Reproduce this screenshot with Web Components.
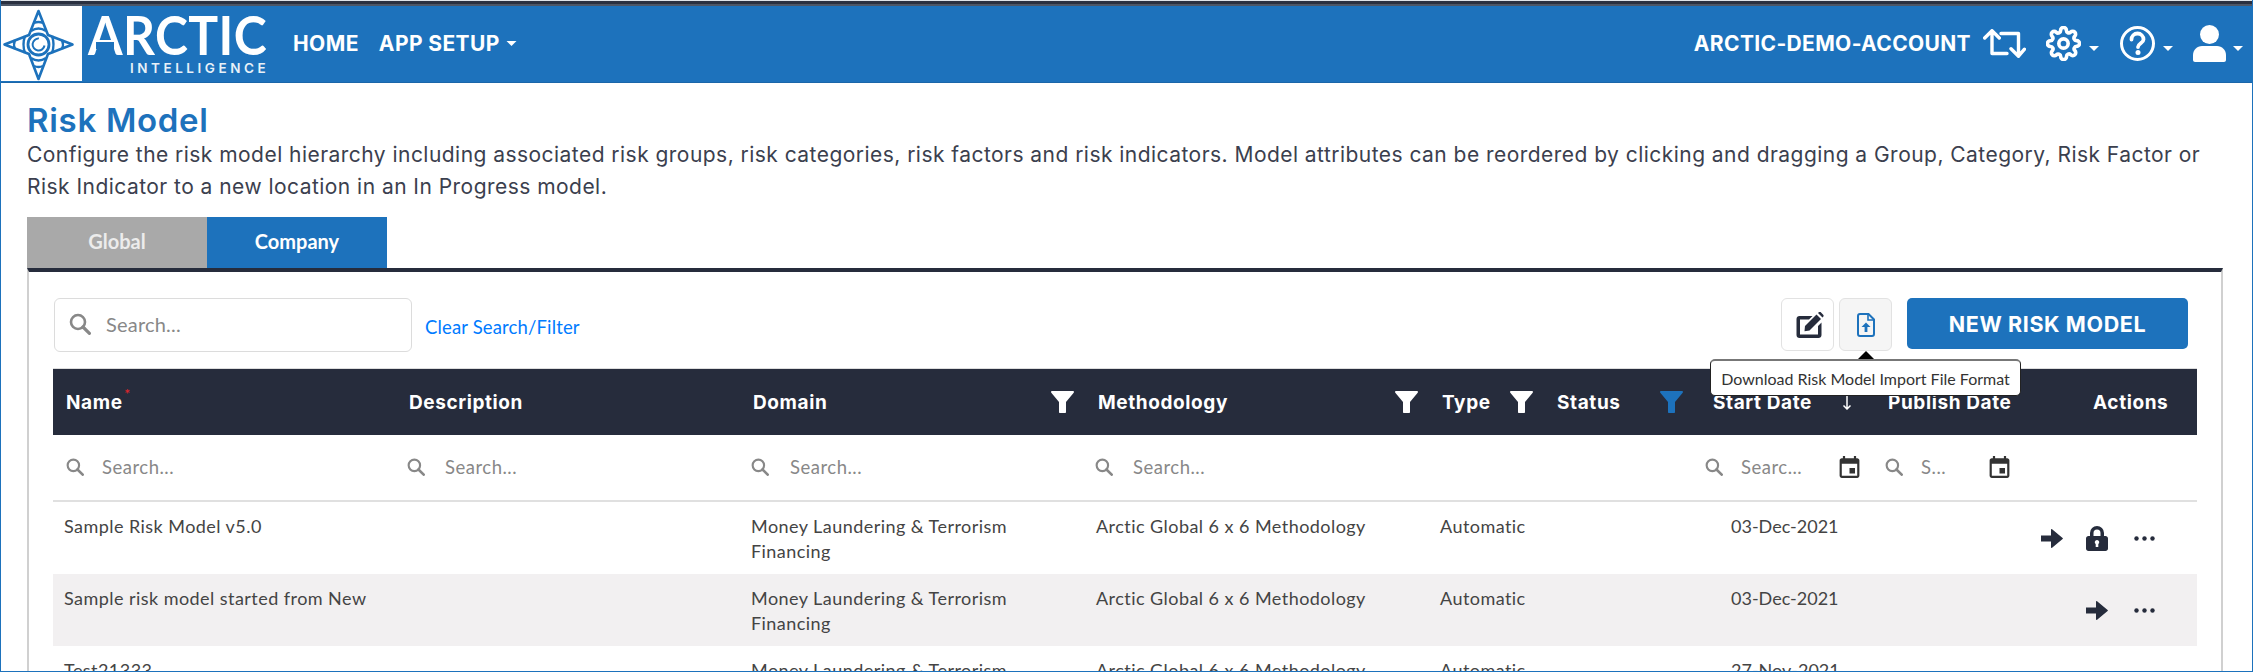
<!DOCTYPE html>
<html lang="en">
<head>
<meta charset="utf-8">
<title>Risk Model</title>
<style>
  html, body { margin: 0; padding: 0; background: #fff; }
</style>
</head>
<body>
<app-frame>
  <top-nav></top-nav>
  <page-intro title-text="Risk Model">Configure the risk model hierarchy including associated risk groups, risk categories, risk factors and risk indicators. Model attributes can be reordered by clicking and dragging a Group, Category, Risk Factor or Risk Indicator to a new location in an In Progress model.</page-intro>
  <tab-strip></tab-strip>
  <risk-panel>
    <risk-toolbar></risk-toolbar>
    <risk-table></risk-table>
  </risk-panel>
</app-frame>

<script>
// Icons are all inline svg, keyed by name.
const ICONS = {
  search: '<svg viewBox="0 0 22 22"><circle cx="9" cy="9" r="7" fill="none" stroke="currentColor" stroke-width="2.6"/><path d="M14 14l6.4 6.4" stroke="currentColor" stroke-width="3.2" stroke-linecap="round"/></svg>',
  filter: '<svg viewBox="0 0 23 22"><path d="M1 0h21c1 0 1.300 1 .7 1.700L15 11v10c0 .6-.4 1-1 1H9c-.6 0-1-.4-1-1V11L.3 1.700C-.3 1 0 0 1 0z" fill="currentColor"/></svg>',
  caret: '<svg viewBox="0 0 12 6"><path d="M0 0h12L6 6z" fill="currentColor"/></svg>',
  swap: '<svg viewBox="0 0 43 29" fill="none" stroke="currentColor" stroke-width="3.400" stroke-linecap="round" stroke-linejoin="round"><path d="M1.700 9L9 1.700 16.300 9M9 2v22.500h15M18 4.500h17.500V27M28 19.700l7.500 7.500 6-7"/></svg>',
  gear: '<svg viewBox="0 0 24 24" fill="none" stroke="currentColor" stroke-width="2.500" stroke-linecap="round" stroke-linejoin="round"><circle cx="12" cy="12" r="3.200"/><path d="M19.400 15a1.650 1.650 0 0 0 .33 1.820l.06.06a2 2 0 0 1 0 2.830 2 2 0 0 1-2.830 0l-.06-.06a1.650 1.650 0 0 0-1.820-.33 1.650 1.650 0 0 0-1 1.510V21a2 2 0 0 1-2 2 2 2 0 0 1-2-2v-.09A1.650 1.650 0 0 0 9 19.400a1.650 1.650 0 0 0-1.820.33l-.06.06a2 2 0 0 1-2.830 0 2 2 0 0 1 0-2.830l.06-.06a1.650 1.650 0 0 0 .33-1.820 1.650 1.650 0 0 0-1.510-1H3a2 2 0 0 1-2-2 2 2 0 0 1 2-2h.09A1.650 1.650 0 0 0 4.600 9a1.650 1.650 0 0 0-.33-1.820l-.06-.06a2 2 0 0 1 0-2.830 2 2 0 0 1 2.830 0l.06.06a1.650 1.650 0 0 0 1.820.33H9a1.650 1.650 0 0 0 1-1.510V3a2 2 0 0 1 2-2 2 2 0 0 1 2 2v.09a1.650 1.650 0 0 0 1 1.510 1.650 1.650 0 0 0 1.820-.33l.06-.06a2 2 0 0 1 2.830 0 2 2 0 0 1 0 2.830l-.06.06a1.650 1.650 0 0 0-.33 1.820V9a1.650 1.650 0 0 0 1.510 1H21a2 2 0 0 1 2 2 2 2 0 0 1-2 2h-.09a1.650 1.650 0 0 0-1.510 1z"/></svg>',
  help: '<svg viewBox="0 0 35 35" fill="none" stroke="currentColor" stroke-linecap="round"><circle cx="17.500" cy="17.500" r="16" stroke-width="3"/><path d="M11.500 13.500a6 6 0 0 1 12 0c0 3.500-5.500 4-5.500 7.500" stroke-width="3.800"/><circle cx="18" cy="26.500" r="2.500" fill="currentColor" stroke="none"/></svg>',
  user: '<svg viewBox="0 0 33 37"><circle cx="16.500" cy="9.500" r="9.500" fill="currentColor"/><path d="M9 21h15c5 0 9 4 9 9v5c0 1-1 2-2 2H2c-1 0-2-1-2-2v-5c0-5 4-9 9-9z" fill="currentColor"/></svg>',
  edit: '<svg viewBox="0 0 28 26"><path d="M3.500 4h13l-3.500 3.500H4v15h18V14l3.500-3.500V23c0 1.700-1.300 3-3 3H3.500C1.800 26 .5 24.700.5 23V7c0-1.700 1.300-3 3-3z" fill="currentColor"/><path d="M9 14L20.500 2.500l4.500 4.500L13.500 18.500l-5 .7z" fill="currentColor"/><path d="M22 1l.8-.7c.6-.5 1.500-.5 2 0l2.400 2.400c.6.600.6 1.400 0 2l-.7.800z" fill="currentColor"/></svg>',
  upload: '<svg viewBox="0 0 18 24" fill="none" stroke="currentColor"><path d="M3 1h8.500L17 6.500V21c0 1.100-.9 2-2 2H3c-1.100 0-2-.9-2-2V3c0-1.100.9-2 2-2z" stroke-width="2"/><path d="M11 1v6h6" stroke-width="1.600"/><path d="M9 19v-6" stroke-width="2.800"/><path d="M4.500 14l4.500-4.500 4.500 4.500z" fill="currentColor" stroke="none"/></svg>',
  calendar: '<svg viewBox="3 1 18 20"><path fill="currentColor" d="M17 12h-5v5h5v-5zM16 1v2H8V1H6v2H5c-1.110 0-1.990.9-1.990 2L3 19c0 1.100.89 2 2 2h14c1.100 0 2-.9 2-2V5c0-1.100-.9-2-2-2h-1V1h-2zm3 18H5V8h14v11z"/></svg>',
  down: '<svg viewBox="0 0 10 15" fill="none" stroke="currentColor" stroke-width="1.500"><path d="M5 0v13.500M1.500 10.500L5 14l3.500-3.500"/></svg>',
  arrow: '<svg viewBox="0 0 22 19"><path d="M0 6.500h10V.7c0-.6.7-.9 1.100-.5l10.500 8.700c.4.300.4.900 0 1.200L11.100 18.800c-.4.400-1.100.100-1.100-.5V12.500H0z" fill="currentColor"/></svg>',
  lock: '<svg viewBox="0 0 22 25"><path fill-rule="evenodd" fill="currentColor" d="M4 10V7a7 7 0 0 1 14 0v3h1.500c1.400 0 2.500 1.100 2.500 2.500v10c0 1.400-1.100 2.500-2.500 2.500h-17C1.100 25 0 23.900 0 22.500v-10C0 11.100 1.100 10 2.500 10zm3.500 0h7V7a3.500 3.500 0 0 0-7 0zM11 14a2.200 2.200 0 0 0-1.300 4v3h2.600v-3A2.200 2.200 0 0 0 11 14z"/></svg>',
  dots: '<svg viewBox="0 0 21 5"><circle cx="2.500" cy="2.500" r="2.200" fill="currentColor"/><circle cx="10.500" cy="2.500" r="2.200" fill="currentColor"/><circle cx="18.500" cy="2.500" r="2.200" fill="currentColor"/></svg>'
};

class AiIcon extends HTMLElement {
  constructor() {
    super();
    this.attachShadow({ mode: 'open' });
  }
  connectedCallback() {
    const w = this.getAttribute('w') || 18;
    const h = this.getAttribute('h') || w;
    this.shadowRoot.innerHTML = `
      <style>
        :host { display: inline-flex; flex: none; width: ${w}px; height: ${h}px; }
        svg { display: block; width: 100%; height: 100%; }
      </style>
      ${ICONS[this.getAttribute('name')] || ''}`;
  }
}

class AppFrame extends HTMLElement {
  constructor() {
    super();
    this.attachShadow({ mode: 'open' }).innerHTML = `
      <style>
        :host {
          display: flex;
          flex-direction: column;
          box-sizing: border-box;
          width: 2253px;
          height: 672px;
          overflow: hidden;
          background: #fff;
          border-left: 1px solid #1d72bc;
          border-right: 1px solid #1d72bc;
          border-bottom: 1px solid #1d72bc;
          font-family: "Lato", "Liberation Sans", sans-serif;
        }
        .chrome { flex: none; height: 6px; box-sizing: border-box; background: #2a3040; border-top: 1px solid #dfe3e8; border-bottom: 2px solid #4d5666; }
      </style>
      <div class="chrome"></div>
      <slot></slot>`;
  }
}

class TopNav extends HTMLElement {
  constructor() {
    super();
    this.attachShadow({ mode: 'open' }).innerHTML = `
      <style>
        :host {
          display: flex;
          flex: none;
          align-items: center;
          box-sizing: border-box;
          height: 77px;
          padding-bottom: 1px;
          background: #1d72bc;
          border-bottom: 1px solid #1a66a9;
          color: #fff;
          font-family: "Inter", "Liberation Sans", sans-serif;
          font-weight: 700;
          font-size: 21px;
          letter-spacing: .4px;
        }
        .logo { display: block; flex: none; overflow: visible; }
        .links { display: flex; align-items: center; margin-left: 27px; gap: 20px; }
        .item { display: flex; align-items: center; }
        .tools { display: flex; align-items: center; margin-left: auto; padding-right: 8px; }
        .acct { margin-right: 12px; letter-spacing: .35px; }
        .tools ai-icon[name=caret] { margin-top: 9px; }
      </style>
      <svg class="logo" width="265" height="75" viewBox="0 0 265 75">
        <rect width="81" height="75" fill="#fff"/>
        <g fill="none" stroke="#1d72bc">
          <path d="M37.500 5L47 29 71.500 38.500 47 48 37.500 73 28 48 3.500 38.500 28 29z" stroke-width="2.600" stroke-linejoin="round"/>
          <path d="M30 25q7.500-5 15 0M30 52q7.500 5 15 0M24 30q-3 8.500 0 17M51 30q3 8.500 0 17M33 17q4.500-2 9 0M33 60q4.500 2 9 0M14 34q-2 4.500 0 9M61 34q2 4.500 0 9" stroke-width="2.400"/>
          <circle cx="37.500" cy="38.500" r="10.500" stroke-width="2.800"/>
          <path d="M38 32.500a6 6 0 1 0 5.500 7" stroke-width="2"/>
        </g>
        <circle cx="41" cy="34.500" r="3.600" fill="#fff"/>
        <text x="87" y="49" font-family="Lato, sans-serif" font-size="53" font-weight="700" fill="#fff" textLength="179" lengthAdjust="spacingAndGlyphs">ARCTIC</text>
        <rect x="95" y="36" width="18" height="7" fill="#1d72bc"/>
        <text x="129" y="67" font-family="Inter, sans-serif" font-size="13.500" font-weight="600" fill="#e8f1f8" textLength="136">INTELLIGENCE</text>
      </svg>
      <div class="links">
        <span class="item">HOME</span>
        <span class="item">APP SETUP<ai-icon name="caret" w="11" h="5" style="margin-left:6px"></ai-icon></span>
      </div>
      <div class="tools">
        <span class="acct">ARCTIC-DEMO-ACCOUNT</span>
        <ai-icon name="swap" w="43" h="29"></ai-icon>
        <ai-icon name="gear" w="35" h="35" style="margin-left:20px"></ai-icon>
        <ai-icon name="caret" w="12" h="5" style="margin-left:7px"></ai-icon>
        <ai-icon name="help" w="35" h="35" style="margin-left:20px"></ai-icon>
        <ai-icon name="caret" w="12" h="5" style="margin-left:7px"></ai-icon>
        <ai-icon name="user" w="33" h="37" style="margin-left:19px"></ai-icon>
        <ai-icon name="caret" w="12" h="5" style="margin-left:6px"></ai-icon>
      </div>`;
  }
}

class PageIntro extends HTMLElement {
  constructor() {
    super();
    this.attachShadow({ mode: 'open' }).innerHTML = `
      <style>
        :host { display: block; flex: none; padding: 18px 26px 14px; font-family: "Inter", "Liberation Sans", sans-serif; }
        h1 { margin: 0; font-size: 33px; line-height: 38px; font-weight: 600; color: #1d72bc; letter-spacing: .7px; }
        p { margin: 0; font-size: 21px; line-height: 32px; color: #3b404e; letter-spacing: .46px; }
      </style>
      <h1></h1>
      <p><slot></slot></p>`;
  }
  connectedCallback() {
    this.shadowRoot.querySelector('h1').textContent = this.getAttribute('title-text');
  }
}

class TabStrip extends HTMLElement {
  constructor() {
    super();
    this.attachShadow({ mode: 'open' }).innerHTML = `
      <style>
        :host { display: flex; flex: none; padding-left: 26px; font-family: "Lato", "Liberation Sans", sans-serif; font-size: 20px; font-weight: 700; color: #fff; }
        div { display: flex; align-items: center; justify-content: center; width: 180px; height: 51px; box-sizing: border-box; padding-bottom: 3px; }
        .off { background: #a9a9a9; color: #ececec; }
        .on { background: #1d72bc; }
      </style>
      <div class="off">Global</div>
      <div class="on">Company</div>`;
  }
}

class RiskPanel extends HTMLElement {
  constructor() {
    super();
    this.attachShadow({ mode: 'open' }).innerHTML = `
      <style>
        :host {
          display: block;
          flex: 1 0 auto;
          box-sizing: border-box;
          margin: 0 29px 0 26px;
          padding: 26px 24px 0;
          border-top: 4px solid #262c3c;
          border-left: 2px solid #d0d0d0;
          border-right: 2px solid #d0d0d0;
        }
      </style>
      <slot></slot>`;
  }
}

class RiskToolbar extends HTMLElement {
  constructor() {
    super();
    this.attachShadow({ mode: 'open' }).innerHTML = `
      <style>
        :host { display: flex; align-items: flex-start; position: relative; height: 54px; margin-bottom: 16px; font-family: "Lato", "Liberation Sans", sans-serif; }
        .search { display: flex; align-items: center; box-sizing: border-box; width: 358px; height: 54px; margin-left: 1px; padding: 0 0 2px 14px; border: 1px solid #dcdcdc; border-radius: 6px; color: #888; font-size: 20px; letter-spacing: .2px; }
        .search span { margin-left: 15px; }
        .clear { align-self: center; margin-left: 13px; color: #007bff; font-size: 18.500px; letter-spacing: .15px; margin-top: 3px; }
        .btn { display: flex; align-items: center; justify-content: center; box-sizing: border-box; width: 53px; height: 53px; border: 1px solid #e2e2e2; border-radius: 6px; color: #262c3c; background: #fff; }
        .btn.first { margin-left: auto; padding-left: 5px; }
        .btn.up { margin-left: 5px; background: #f5f5f5; color: #1d72bc; }
        .new { display: flex; align-items: center; justify-content: center; width: 281px; height: 51px; margin: 0 9px 0 15px; border-radius: 5px; background: #1d72bc; color: #fff; font-family: "Inter", "Liberation Sans", sans-serif; font-size: 21.500px; font-weight: 700; letter-spacing: .6px; }
        .tip { position: absolute; right: 176px; top: 61px; z-index: 5; box-sizing: border-box; width: 311px; height: 37px; display: flex; align-items: center; justify-content: center; background: #fff; border: 1px solid #222; border-top: 2px solid #777; border-radius: 5px; font-size: 16px; color: #333; }
        .tip::before { content: ""; position: absolute; top: -10px; left: 147px; border: 8px solid transparent; border-top: 0; border-bottom-color: #000; }
      </style>
      <div class="search"><ai-icon name="search" w="22"></ai-icon><span>Search...</span></div>
      <span class="clear">Clear Search/Filter</span>
      <div class="btn first"><ai-icon name="edit" w="28" h="26"></ai-icon></div>
      <div class="btn up"><ai-icon name="upload" w="18" h="24"></ai-icon></div>
      <div class="new">NEW RISK MODEL</div>
      <div class="tip">Download Risk Model Import File Format</div>`;
  }
}

const MODELS = [
  { name: 'Sample Risk Model v5.0', date: '03-Dec-2021', lock: true },
  { name: 'Sample risk model started from New', date: '03-Dec-2021', lock: false },
  { name: 'Test21333', date: '27-Nov-2021', lock: false }
];

class RiskTable extends HTMLElement {
  constructor() {
    super();
    this.attachShadow({ mode: 'open' });
  }

  filterCell(placeholder, left, gap) {
    return `<div class="cell fc" style="padding-left:${left}px"><ai-icon name="search" w="18"></ai-icon><span class="ph" style="margin-left:${gap}px">${placeholder}</span></div>`;
  }

  connectedCallback() {
    const rows = MODELS.map((m, i) => `
      <div class="row${i % 2 ? ' alt' : ''}">
        <div class="cell">${m.name}</div>
        <div class="cell"></div>
        <div class="cell">Money Laundering &amp; Terrorism Financing</div>
        <div class="cell">Arctic Global 6 x 6 Methodology</div>
        <div class="cell">Automatic</div>
        <div class="cell"></div>
        <div class="cell date">${m.date}</div>
        <div class="cell"></div>
        <div class="cell acts">
          <ai-icon name="arrow" w="22" h="19"></ai-icon>
          ${m.lock ? '<ai-icon name="lock" w="22" h="25"></ai-icon>' : ''}
          <ai-icon class="more" name="dots" w="21" h="5"></ai-icon>
        </div>
      </div>`).join('');

    this.shadowRoot.innerHTML = `
      <style>
        :host {
          display: block;
          border-top: 1px solid #ddd;
          font-family: "Lato", "Liberation Sans", sans-serif;
          --cols: 343px 344px 345px 344px 115px 150px 180px 158px 165px;
        }
        .row { display: grid; grid-template-columns: var(--cols); }
        .head { height: 66px; align-items: center; background: #262c3c; color: #fff; font-family: "Inter", "Liberation Sans", sans-serif; font-weight: 700; font-size: 19px; letter-spacing: .6px; }
        .head .cell { display: flex; align-items: center; justify-content: space-between; padding: 0 11px 0 13px; }
        .head .cell.plain { justify-content: flex-start; }
        .head sup { color: #e0252b; font-size: 11px; line-height: 0; align-self: flex-start; margin: 2px auto 0 2px; font-weight: 400; }
        .filters { height: 67px; box-sizing: border-box; border-bottom: 2px solid #e0e0e0; align-items: center; color: #888; font-size: 18.500px; letter-spacing: .5px; padding-bottom: 2px; }
        .fc { display: flex; align-items: center; }
        .ph { margin-left: 18px; }
        .cal { margin-left: auto; color: #333; }
        .body .row { height: 72px; font-size: 18px; line-height: 25px; color: #444; letter-spacing: .45px; }
        .body .cell { padding: 12px 11px 0; box-sizing: border-box; }
        .body .date { padding-left: 37px; letter-spacing: 0; }
        .alt { background: #f2f0f1; }
        .acts { display: flex; align-items: flex-start; justify-content: flex-end; gap: 23px; padding: 0 !important; margin-right: 42px; color: #262c3c; }
        .acts ai-icon { align-self: center; }
        .acts .more { margin-left: 3px; }
      </style>
      <div class="row head">
        <div class="cell">Name<sup>*</sup></div>
        <div class="cell">Description</div>
        <div class="cell">Domain<ai-icon name="filter" w="23" h="22"></ai-icon></div>
        <div class="cell">Methodology<ai-icon name="filter" w="23" h="22"></ai-icon></div>
        <div class="cell">Type<ai-icon name="filter" w="23" h="22"></ai-icon></div>
        <div class="cell">Status<ai-icon name="filter" w="23" h="22" style="color:#1d72bc"></ai-icon></div>
        <div class="cell" style="padding-left:19px;padding-right:22px">Start Date<ai-icon name="down" w="10" h="15"></ai-icon></div>
        <div class="cell plain" style="padding-left:14px">Publish Date</div>
        <div class="cell plain" style="padding-left:61px">Actions</div>
      </div>
      <div class="row filters">
        ${this.filterCell('Search...', 13, 18)}
        ${this.filterCell('Search...', 11, 20)}
        ${this.filterCell('Search...', 11, 21)}
        ${this.filterCell('Search...', 10, 20)}
        <div class="cell"></div>
        <div class="cell"></div>
        <div class="cell fc" style="padding-left:11px;padding-right:14px"><ai-icon name="search" w="18"></ai-icon><span class="ph">Searc...</span><ai-icon class="cal" name="calendar" w="21" h="22"></ai-icon></div>
        <div class="cell fc" style="padding-left:11px;padding-right:22px"><ai-icon name="search" w="18"></ai-icon><span class="ph">S...</span><ai-icon class="cal" name="calendar" w="21" h="22"></ai-icon></div>
        <div class="cell"></div>
      </div>
      <div class="body">${rows}</div>`;
  }
}

customElements.define('ai-icon', AiIcon);
customElements.define('app-frame', AppFrame);
customElements.define('top-nav', TopNav);
customElements.define('page-intro', PageIntro);
customElements.define('tab-strip', TabStrip);
customElements.define('risk-panel', RiskPanel);
customElements.define('risk-toolbar', RiskToolbar);
customElements.define('risk-table', RiskTable);
</script>
</body>
</html>
